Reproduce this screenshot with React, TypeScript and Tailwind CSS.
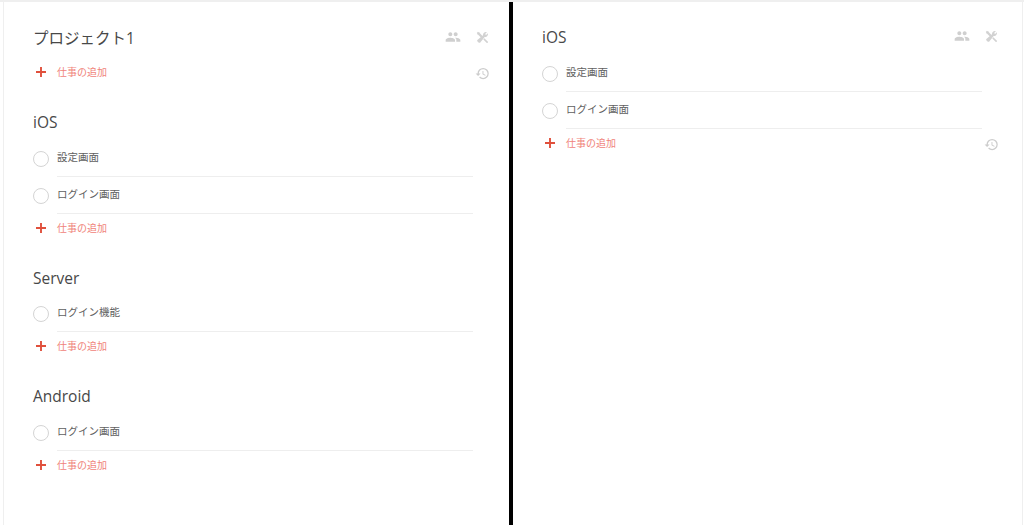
import React from 'react';
import { MdPeople, MdHistory } from 'react-icons/md';

const ToolsIcon = () => (
  <svg viewBox="0 0 24 24" className="w-[13px] h-[13px]" fill="#d2d2d2">
    <path d="M5.5 2.5 L12.5 9.5 L9.5 12.5 L2.5 5.5 Z" />
    <path d="M1.5 3.5 L3.5 1.5 L7 3.5 L3.5 7 Z" />
    <path d="M13 8 C12.5 4.5 16 1 20 2.2 L16.8 5.4 L18.6 7.2 L21.8 4 C23 8 19.5 11.5 16 11 L7.5 21.5 C5.8 23.2 0.8 18.2 2.5 16.5 Z" />
    <path d="M13.5 15.5 L15.5 13.5 L22 20 C22.6 21.4 21.4 22.6 20 22 Z" />
  </svg>
);

const PlusIcon = () => (
  <svg viewBox="0 0 10 10" className="w-[10px] h-[10px]" stroke="#e0503c" strokeWidth="1.9">
    <path d="M0 5 H10 M5 0 V10" />
  </svg>
);

const Row = ({ label }: { label: string }) => (
  <div className="flex h-[37px] items-center">
    <div className="w-4 h-4 rounded-full border border-[#d4d4d4] bg-white shrink-0" />
    <div className="ml-2 flex-1 h-full flex items-center border-b border-[#eeeeee] text-[10.5px] text-[#5f5f5f]">{label}</div>
  </div>
);

const AddRow = ({ history }: { history?: boolean }) => (
  <div className="relative flex items-center h-[20px]">
    <div className="w-4 flex justify-center">
      <PlusIcon />
    </div>
    <span className="ml-2 text-[10px] text-[#f0837a]">仕事の追加</span>
    {history && <MdHistory className="absolute left-[calc(100%+2px)] top-[4px] w-[15px] h-[15px] text-[#cccccc]" />}
  </div>
);

const Heading = ({ title, icons }: { title: string; icons?: boolean }) => (
  <div className="relative flex items-center h-[24px] pt-[2px] text-[15.5px] text-[#484848]">
    <span>{title}</span>
    {icons && (
      <div className="absolute left-[calc(100%-28px)] top-[3px] flex items-center gap-[15px]">
        <MdPeople className="w-[16px] h-[16px] text-[#cfcfcf]" />
        <ToolsIcon />
      </div>
    )}
  </div>
);

export default function App() {
  return (
    <div className="w-[1024px] h-[525px] overflow-hidden flex bg-white border-t-2 border-[#efefef] font-['Open_Sans','Noto_Sans_CJK_JP',sans-serif]">
      <div className="w-[509px] shrink-0 h-full pl-[3px]">
        <div className="h-full border-l border-[#efefef] pl-[29px] pr-[36px] pt-[24px]">
          <Heading title="プロジェクト1" icons />
          <div className="mt-[12px]"><AddRow history /></div>
          <div className="mt-[28px]">
            <Heading title="iOS" />
            <div className="mt-[6px]">
              <Row label="設定画面" />
              <Row label="ログイン画面" />
            </div>
            <div className="mt-[4px]"><AddRow /></div>
          </div>
          <div className="mt-[28px]">
            <Heading title="Server" />
            <div className="mt-[5px]">
              <Row label="ログイン機能" />
            </div>
            <div className="mt-[4px]"><AddRow /></div>
          </div>
          <div className="mt-[28px]">
            <Heading title="Android" />
            <div className="mt-[6px]">
              <Row label="ログイン画面" />
            </div>
            <div className="mt-[4px]"><AddRow /></div>
          </div>
        </div>
      </div>
      <div className="w-[4px] shrink-0 h-full bg-black" />
      <div className="flex-1 h-full pr-[1px]">
        <div className="h-full border-r border-[#efefef] pl-[29px] pr-[40px] pt-[23px]">
          <Heading title="iOS" icons />
          <div className="mt-[6px]">
            <Row label="設定画面" />
            <Row label="ログイン画面" />
          </div>
          <div className="mt-[4px]"><AddRow history /></div>
        </div>
      </div>
    </div>
  );
}
